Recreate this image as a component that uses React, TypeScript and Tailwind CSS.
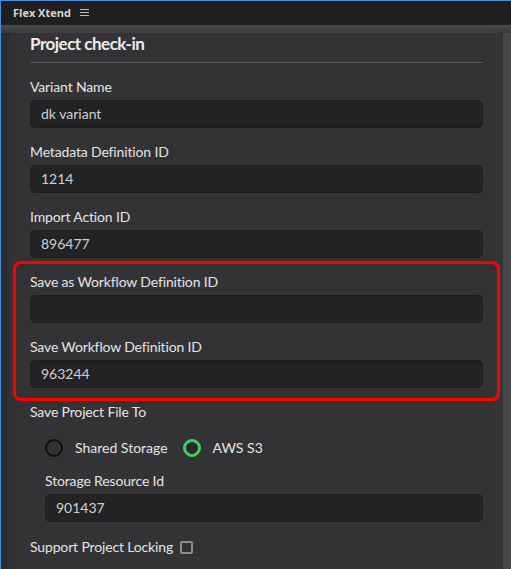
import React from 'react'

const font = { fontFamily: 'Lato, "Open Sans", sans-serif' }

function Field({ label, value, indent = false }: { label: string; value: string; indent?: boolean }) {
  return (
    <div className={`flex flex-col ${indent ? 'pl-[15px]' : ''}`}>
      <label className="text-[14px] leading-[20px] tracking-[-0.15px] text-[#e4e4e6]">{label}</label>
      <div className="mt-[3px] h-[28px] rounded-[5px] border border-[#1d1d1f] bg-[#232325] px-[10px] text-[14px] leading-[26px] text-[#d0d0d2]">
        {value}
      </div>
    </div>
  )
}

function Radio({ label, checked }: { label: string; checked?: boolean }) {
  return (
    <div className="flex items-center gap-[12px]">
      <span
        className={
          checked
            ? 'h-[18px] w-[18px] rounded-full border-[3px] border-[#3fd05c] bg-[#29292b]'
            : 'h-[18px] w-[18px] rounded-full border-2 border-[#0e0e0f]'
        }
      />
      <span className="text-[14px] leading-[20px] text-[#e4e4e6]">{label}</span>
    </div>
  )
}

export default function App() {
  return (
    <div
      className="relative h-[569px] w-[511px] overflow-hidden border-l border-t border-[#4a8fdc] bg-[#2c2c2f]"
      style={font}
    >
      {/* panel header */}
      <div className="flex h-[24px] items-center gap-[9px] bg-[#1f1f1f] pl-[12px]">
        <span className="text-[11px] font-bold text-[#d6d6d6]" style={{ fontFamily: '"Open Sans", sans-serif' }}>
          Flex Xtend
        </span>
        <svg width="9" height="8" viewBox="0 0 9 8" className="text-[#bdbdbd]">
          <path d="M0 0.5H9M0 3.5H9M0 6.5H9" stroke="currentColor" strokeWidth="1" />
        </svg>
      </div>

      <div className="h-[8px] bg-gradient-to-b from-[#4a4a4d] to-[#38383b]" />

      <div className="flex h-full">
        <div className="w-[9px] bg-[#2c2c2f]" />
        <div className="flex-1 rounded-t-[8px] bg-[#333336] px-[20px] shadow-[0_0_3px_rgba(90,90,95,0.6)]">
          <h1 className="text-[17px] font-bold leading-[22px] tracking-[-0.5px] text-[#ececee]">Project check-in</h1>
          <div className="mt-[7px] h-px bg-[#5c5c60]" />

          <div className="mt-[14px] flex flex-col gap-[14px]">
            <Field label="Variant Name" value="dk variant" />
            <Field label="Metadata Definition ID" value="1214" />
            <Field label="Import Action ID" value="896477" />
            <Field label="Save as Workflow Definition ID" value="" />
            <Field label="Save Workflow Definition ID" value="963244" />

            <div className="flex flex-col">
              <span className="text-[14px] leading-[20px] tracking-[-0.15px] text-[#e4e4e6]">Save Project File To</span>
              <div className="mt-[16px] flex items-center gap-[15px] pl-[15px]">
                <Radio label="Shared Storage" />
                <Radio label="AWS S3" checked />
              </div>
              <div className="mt-[13px]">
                <Field label="Storage Resource Id" value="901437" indent />
              </div>
            </div>

            <div className="mt-[1px] flex items-center gap-[7px]">
              <span className="text-[14px] leading-[20px] tracking-[-0.15px] text-[#e4e4e6]">Support Project Locking</span>
              <span className="h-[13px] w-[13px] rounded-[2px] border-2 border-[#8c8c90]" />
            </div>
          </div>
        </div>
        <div className="w-[8px] bg-[#47474a]" />
      </div>

      {/* annotation highlight */}
      <div className="absolute left-[12px] top-[260px] h-[140px] w-[487px] rounded-[8px] border-[3px] border-[#ff0000]" />
    </div>
  )
}
